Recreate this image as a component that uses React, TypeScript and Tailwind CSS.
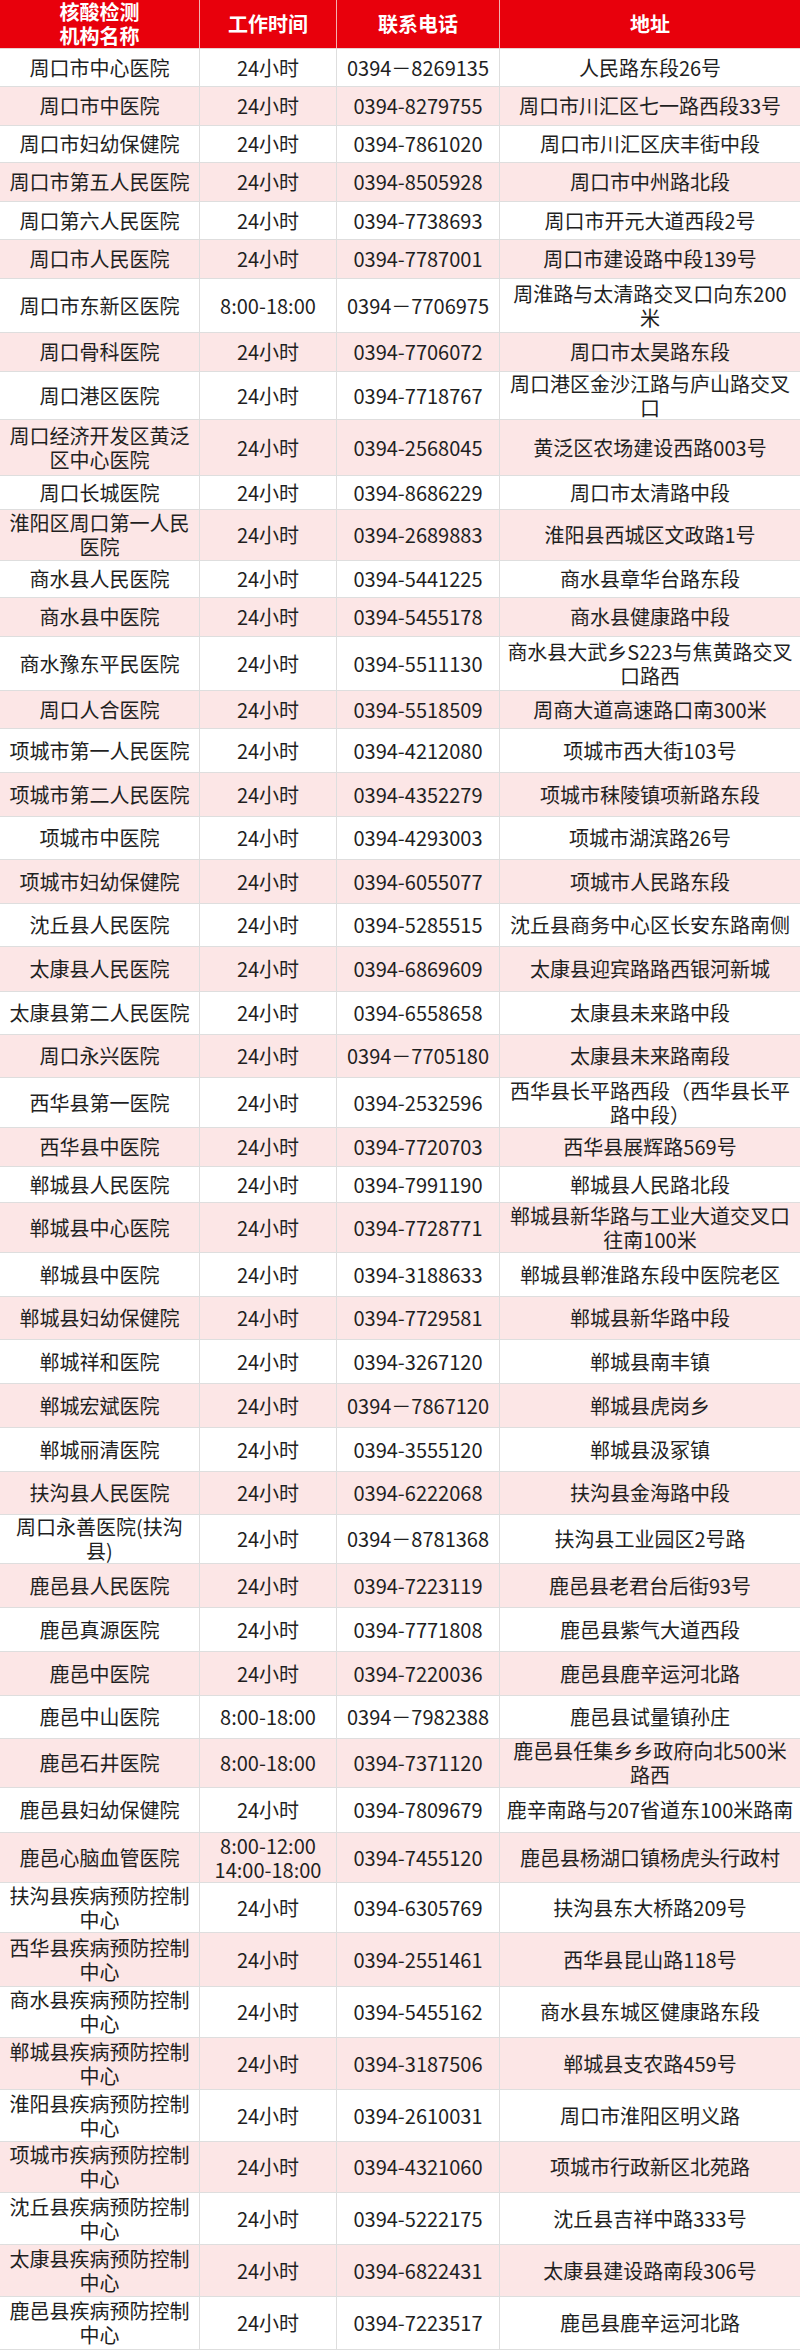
import React from 'react';

type Row = { name: string; hours: string; phone: string; address: string; h: string };

const rows: Row[] = [
  { name: '周口市中心医院', hours: '24小时', phone: '0394－8269135', address: '人民路东段26号', h: 'h-[38px]' },
  { name: '周口市中医院', hours: '24小时', phone: '0394-8279755', address: '周口市川汇区七一路西段33号', h: 'h-[39px]' },
  { name: '周口市妇幼保健院', hours: '24小时', phone: '0394-7861020', address: '周口市川汇区庆丰街中段', h: 'h-[37px]' },
  { name: '周口市第五人民医院', hours: '24小时', phone: '0394-8505928', address: '周口市中州路北段', h: 'h-[39px]' },
  { name: '周口第六人民医院', hours: '24小时', phone: '0394-7738693', address: '周口市开元大道西段2号', h: 'h-[38px]' },
  { name: '周口市人民医院', hours: '24小时', phone: '0394-7787001', address: '周口市建设路中段139号', h: 'h-[39px]' },
  { name: '周口市东新区医院', hours: '8:00-18:00', phone: '0394－7706975', address: '周淮路与太清路交叉口向东200\n米', h: 'h-[54px]' },
  { name: '周口骨科医院', hours: '24小时', phone: '0394-7706072', address: '周口市太昊路东段', h: 'h-[39px]' },
  { name: '周口港区医院', hours: '24小时', phone: '0394-7718767', address: '周口港区金沙江路与庐山路交叉\n口', h: 'h-[48px]' },
  { name: '周口经济开发区黄泛\n区中心医院', hours: '24小时', phone: '0394-2568045', address: '黄泛区农场建设西路003号', h: 'h-[56px]' },
  { name: '周口长城医院', hours: '24小时', phone: '0394-8686229', address: '周口市太清路中段', h: 'h-[34px]' },
  { name: '淮阳区周口第一人民\n医院', hours: '24小时', phone: '0394-2689883', address: '淮阳县西城区文政路1号', h: 'h-[51px]' },
  { name: '商水县人民医院', hours: '24小时', phone: '0394-5441225', address: '商水县章华台路东段', h: 'h-[37px]' },
  { name: '商水县中医院', hours: '24小时', phone: '0394-5455178', address: '商水县健康路中段', h: 'h-[39px]' },
  { name: '商水豫东平民医院', hours: '24小时', phone: '0394-5511130', address: '商水县大武乡S223与焦黄路交叉\n口路西', h: 'h-[54px]' },
  { name: '周口人合医院', hours: '24小时', phone: '0394-5518509', address: '周商大道高速路口南300米', h: 'h-[38px]' },
  { name: '项城市第一人民医院', hours: '24小时', phone: '0394-4212080', address: '项城市西大街103号', h: 'h-[44px]' },
  { name: '项城市第二人民医院', hours: '24小时', phone: '0394-4352279', address: '项城市秣陵镇项新路东段', h: 'h-[44px]' },
  { name: '项城市中医院', hours: '24小时', phone: '0394-4293003', address: '项城市湖滨路26号', h: 'h-[43px]' },
  { name: '项城市妇幼保健院', hours: '24小时', phone: '0394-6055077', address: '项城市人民路东段', h: 'h-[44px]' },
  { name: '沈丘县人民医院', hours: '24小时', phone: '0394-5285515', address: '沈丘县商务中心区长安东路南侧', h: 'h-[43px]' },
  { name: '太康县人民医院', hours: '24小时', phone: '0394-6869609', address: '太康县迎宾路路西银河新城', h: 'h-[45px]' },
  { name: '太康县第二人民医院', hours: '24小时', phone: '0394-6558658', address: '太康县未来路中段', h: 'h-[43px]' },
  { name: '周口永兴医院', hours: '24小时', phone: '0394－7705180', address: '太康县未来路南段', h: 'h-[43px]' },
  { name: '西华县第一医院', hours: '24小时', phone: '0394-2532596', address: '西华县长平路西段（西华县长平\n路中段）', h: 'h-[50px]' },
  { name: '西华县中医院', hours: '24小时', phone: '0394-7720703', address: '西华县展辉路569号', h: 'h-[39px]' },
  { name: '郸城县人民医院', hours: '24小时', phone: '0394-7991190', address: '郸城县人民路北段', h: 'h-[36px]' },
  { name: '郸城县中心医院', hours: '24小时', phone: '0394-7728771', address: '郸城县新华路与工业大道交叉口\n往南100米', h: 'h-[50px]' },
  { name: '郸城县中医院', hours: '24小时', phone: '0394-3188633', address: '郸城县郸淮路东段中医院老区', h: 'h-[44px]' },
  { name: '郸城县妇幼保健院', hours: '24小时', phone: '0394-7729581', address: '郸城县新华路中段', h: 'h-[43px]' },
  { name: '郸城祥和医院', hours: '24小时', phone: '0394-3267120', address: '郸城县南丰镇', h: 'h-[44px]' },
  { name: '郸城宏斌医院', hours: '24小时', phone: '0394－7867120', address: '郸城县虎岗乡', h: 'h-[44px]' },
  { name: '郸城丽清医院', hours: '24小时', phone: '0394-3555120', address: '郸城县汲冢镇', h: 'h-[44px]' },
  { name: '扶沟县人民医院', hours: '24小时', phone: '0394-6222068', address: '扶沟县金海路中段', h: 'h-[43px]' },
  { name: '周口永善医院(扶沟\n县)', hours: '24小时', phone: '0394－8781368', address: '扶沟县工业园区2号路', h: 'h-[49px]' },
  { name: '鹿邑县人民医院', hours: '24小时', phone: '0394-7223119', address: '鹿邑县老君台后街93号', h: 'h-[44px]' },
  { name: '鹿邑真源医院', hours: '24小时', phone: '0394-7771808', address: '鹿邑县紫气大道西段', h: 'h-[44px]' },
  { name: '鹿邑中医院', hours: '24小时', phone: '0394-7220036', address: '鹿邑县鹿辛运河北路', h: 'h-[44px]' },
  { name: '鹿邑中山医院', hours: '8:00-18:00', phone: '0394－7982388', address: '鹿邑县试量镇孙庄', h: 'h-[43px]' },
  { name: '鹿邑石井医院', hours: '8:00-18:00', phone: '0394-7371120', address: '鹿邑县任集乡乡政府向北500米\n路西', h: 'h-[49px]' },
  { name: '鹿邑县妇幼保健院', hours: '24小时', phone: '0394-7809679', address: '鹿辛南路与207省道东100米路南', h: 'h-[45px]' },
  { name: '鹿邑心脑血管医院', hours: '8:00-12:00\n14:00-18:00', phone: '0394-7455120', address: '鹿邑县杨湖口镇杨虎头行政村', h: 'h-[50px]' },
  { name: '扶沟县疾病预防控制\n中心', hours: '24小时', phone: '0394-6305769', address: '扶沟县东大桥路209号', h: 'h-[50px]' },
  { name: '西华县疾病预防控制\n中心', hours: '24小时', phone: '0394-2551461', address: '西华县昆山路118号', h: 'h-[54px]' },
  { name: '商水县疾病预防控制\n中心', hours: '24小时', phone: '0394-5455162', address: '商水县东城区健康路东段', h: 'h-[51px]' },
  { name: '郸城县疾病预防控制\n中心', hours: '24小时', phone: '0394-3187506', address: '郸城县支农路459号', h: 'h-[52px]' },
  { name: '淮阳县疾病预防控制\n中心', hours: '24小时', phone: '0394-2610031', address: '周口市淮阳区明义路', h: 'h-[52px]' },
  { name: '项城市疾病预防控制\n中心', hours: '24小时', phone: '0394-4321060', address: '项城市行政新区北苑路', h: 'h-[51px]' },
  { name: '沈丘县疾病预防控制\n中心', hours: '24小时', phone: '0394-5222175', address: '沈丘县吉祥中路333号', h: 'h-[52px]' },
  { name: '太康县疾病预防控制\n中心', hours: '24小时', phone: '0394-6822431', address: '太康县建设路南段306号', h: 'h-[52px]' },
  { name: '鹿邑县疾病预防控制\n中心', hours: '24小时', phone: '0394-7223517', address: '鹿邑县鹿辛运河北路', h: 'h-[53px]' },
];

const grid = 'grid grid-cols-[200px_137px_163px_300px]';
const cell = 'flex items-center justify-center text-center whitespace-pre-line leading-[24px] px-[6px]';

const App: React.FC = () => {
  return (
    <div className="w-[800px] bg-white text-[20px] text-[#1f1f1f] font-['Noto_Sans_CJK_SC','Noto_Sans',sans-serif]">
      {/* header */}
      <div className={`${grid} h-[49px] bg-[#e8000c] text-white font-bold leading-[24px] border-b border-[#e9d2d2]`}>
        <div className="flex items-center justify-center text-center border-r border-[#f3b0b0]">核酸检测<br />机构名称</div>
        <div className="flex items-center justify-center border-r border-[#f3b0b0]">工作时间</div>
        <div className="flex items-center justify-center border-r border-[#f3b0b0]">联系电话</div>
        <div className="flex items-center justify-center">地址</div>
      </div>

      {rows.map((r, i) => (
        <div key={i} className={`${grid} ${r.h} border-b border-[#dedede] ${i % 2 === 1 ? 'bg-[#fce6e6]' : 'bg-white'}`}>
          <div className={`${cell} border-r border-[#dedede]`}>{r.name}</div>
          <div className={`${cell} border-r border-[#dedede]`}>{r.hours}</div>
          <div className={`${cell} border-r border-[#dedede]`}>{r.phone}</div>
          <div className={cell}>{r.address}</div>
        </div>
      ))}
    </div>
  );
};

export default App;
